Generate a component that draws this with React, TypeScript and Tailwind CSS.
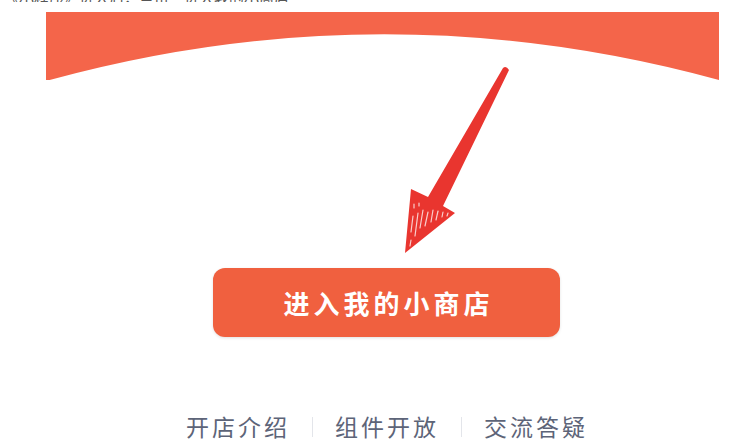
export default function App() {
  const cjk = { fontFamily: '"Noto Sans CJK SC", "Noto Sans", sans-serif' };

  return (
    <div className="relative h-[440px] w-[747px] overflow-hidden bg-white" style={cjk}>
      {/* cut-off caption line at the very top */}
      <div className="flex h-[2px] items-end overflow-hidden pl-[4px] text-[15px] leading-[15px] text-[#555]">
        <span className="-mb-[3px] whitespace-nowrap">《小程序》进入后，点击“进入我的小商店”</span>
      </div>

      {/* orange header with arc */}
      <div className="ml-[46px] mt-[10px] h-[68px] w-[673px]">
        <svg width="673" height="68" viewBox="0 0 673 68" className="block">
          <path d="M0 0 H673 V68 Q336 -24 0 69 Z" fill="#f4654a" />
        </svg>
      </div>

      {/* button */}
      <div className="ml-[213px] mt-[188px] flex h-[69px] w-[347px] items-center justify-center rounded-[12px] bg-[#f0603f] shadow-[0_1px_3px_rgba(0,0,0,0.12)]">
        <span className="pl-[4px] text-[26px] font-bold tracking-[4px] text-white">进入我的小商店</span>
      </div>

      {/* bottom links */}
      <div className="ml-[186px] mt-[76px] flex items-center text-[23px] leading-[27px] tracking-[3px] text-[#5d6478]">
        <span>开店介绍</span>
        <span className="mx-[22px] h-[20px] w-px bg-[#e3e5ea]" />
        <span>组件开放</span>
        <span className="mx-[22px] h-[20px] w-px bg-[#e3e5ea]" />
        <span>交流答疑</span>
      </div>

      {/* red annotation arrow */}
      <svg
        className="pointer-events-none absolute left-0 top-0"
        width="747"
        height="440"
        viewBox="0 0 747 440"
      >
        <path
          d="M503 68 Q506 65 509 70 L443 206 L455 213 L405 253 L411 189 L428 197 Z"
          fill="#e9352f"
        />
        <g stroke="#fff" strokeWidth="1.2" strokeLinecap="round" opacity="0.75">
          <path d="M413 216 L411 232" />
          <path d="M418 213 L415 236" />
          <path d="M423 210 L420 228" />
          <path d="M428 212 L425 226" />
          <path d="M433 210 L431 222" />
          <path d="M438 211 L436 220" />
          <path d="M443 212 L442 217" />
          <path d="M448 213 L447 216" />
          <path d="M414 204 L414 208" />
          <path d="M419 203 L419 206" />
          <path d="M411 240 L410 246" />
        </g>
      </svg>
    </div>
  );
}
